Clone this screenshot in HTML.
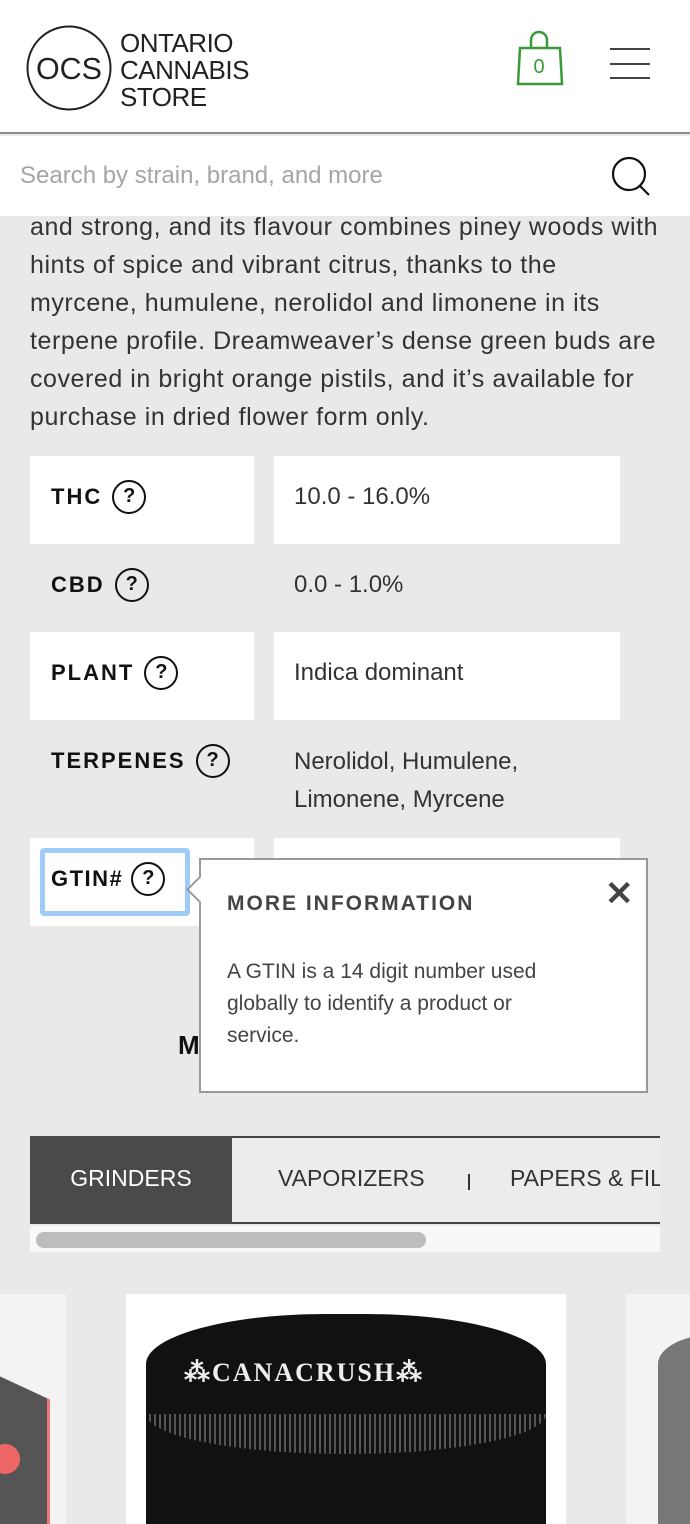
<!DOCTYPE html>
<html><head><meta charset="utf-8"><style>
*{margin:0;padding:0;box-sizing:border-box}
body{width:690px;height:1524px;overflow:hidden;background:#e9e9e9;font-family:"Liberation Sans",sans-serif;color:#333;position:relative}
.abs{position:absolute}
.hdr{left:0;top:0;width:690px;height:134px;background:#fff;border-bottom:2px solid #8c8c8c}
.p{left:30px;top:208px;width:660px;font-size:25px;line-height:38px;color:#333;letter-spacing:0.55px;white-space:nowrap}
.lab{font-size:22px;font-weight:bold;letter-spacing:2px;color:#111;display:flex;align-items:center}
.q{display:inline-block;width:34px;height:34px;border:2.5px solid #111;border-radius:50%;text-align:center;line-height:29px;font-size:20px;margin-left:10px;letter-spacing:0}
.val{font-size:24px;color:#333}
.wb{background:#fff}
</style></head><body>
<div class="abs hdr">
  <svg class="abs" style="left:26px;top:25px" width="86" height="86"><circle cx="43" cy="43" r="41.5" fill="none" stroke="#222" stroke-width="2"/><text x="43" y="54" text-anchor="middle" font-family="Liberation Sans" font-size="31" fill="#222" textLength="66" lengthAdjust="spacingAndGlyphs">OCS</text></svg>
  <div class="abs" style="left:120px;top:30px;font-size:26px;line-height:27px;color:#222;letter-spacing:-0.5px">ONTARIO<br>CANNABIS<br>STORE</div>
  <svg class="abs" style="left:515px;top:30px" width="50" height="56"><path d="M3 54 L5 18 L45 18 L47 54 Z" fill="none" stroke="#3a9a3a" stroke-width="2.5"/><path d="M16 18 V10 a8 8 0 0 1 16 0 V18" fill="none" stroke="#3a9a3a" stroke-width="2.5"/><text x="24" y="43" text-anchor="middle" font-size="20" fill="#3a9a3a" font-family="Liberation Sans">0</text></svg>
  <div class="abs" style="left:610px;top:48px;width:40px;height:2px;background:#444"></div>
  <div class="abs" style="left:610px;top:63px;width:40px;height:2px;background:#444"></div>
  <div class="abs" style="left:610px;top:77px;width:40px;height:2px;background:#444"></div>
</div>
<div class="abs p">and strong, and its flavour combines piney woods with<br>hints of spice and vibrant citrus, thanks to the<br>myrcene, humulene, nerolidol and limonene in its<br>terpene profile. Dreamweaver’s dense green buds are<br>covered in bright orange pistils, and it’s available for<br>purchase in dried flower form only.</div>
<div class="abs" style="left:0;top:136px;width:690px;height:80px;background:#fff;z-index:1">
  <div class="abs" style="left:20px;top:26px;font-size:24px;color:#a5a5a5">Search by strain, brand, and more</div>
  <svg class="abs" style="left:608px;top:18px" width="46" height="46"><circle cx="21" cy="20" r="16" fill="none" stroke="#111" stroke-width="2.2"/><path d="M32 32 L41 41" stroke="#111" stroke-width="2.2"/></svg>
</div>

<div class="abs wb" style="left:30px;top:456px;width:224px;height:88px"></div>
<div class="abs wb" style="left:274px;top:456px;width:346px;height:88px"></div>
<div class="abs lab" style="left:51px;top:480px">THC<span class="q">?</span></div>
<div class="abs val" style="left:294px;top:483px">10.0 - 16.0%</div>

<div class="abs lab" style="left:51px;top:568px">CBD<span class="q">?</span></div>
<div class="abs val" style="left:294px;top:571px">0.0 - 1.0%</div>

<div class="abs wb" style="left:30px;top:632px;width:224px;height:88px"></div>
<div class="abs wb" style="left:274px;top:632px;width:346px;height:88px"></div>
<div class="abs lab" style="left:51px;top:656px">PLANT<span class="q">?</span></div>
<div class="abs val" style="left:294px;top:659px">Indica dominant</div>

<div class="abs lab" style="left:51px;top:744px">TERPENES<span class="q">?</span></div>
<div class="abs val" style="left:294px;top:743px;line-height:38px">Nerolidol, Humulene,<br>Limonene, Myrcene</div>

<div class="abs wb" style="left:30px;top:838px;width:224px;height:88px"></div>
<div class="abs wb" style="left:274px;top:838px;width:346px;height:88px"></div>
<div class="abs" style="left:40px;top:848px;width:150px;height:68px;border:5px solid #9ecbf7;border-radius:4px"></div>
<div class="abs lab" style="left:51px;top:862px;letter-spacing:1.5px">GTIN#<span class="q" style="margin-left:8px">?</span></div>

<div class="abs" style="left:178px;top:1030px;font-size:26px;font-weight:bold;color:#111">M</div>

<div class="abs" style="left:199px;top:858px;width:449px;height:235px;background:#fff;border:2px solid #999">
  <div class="abs" style="left:-11px;top:20px;width:19px;height:19px;background:#fff;border-left:2px solid #999;border-bottom:2px solid #999;transform:rotate(45deg)"></div>
  <div class="abs" style="left:26px;top:32px;font-size:21px;font-weight:bold;letter-spacing:2px;color:#444">MORE INFORMATION</div>
  <div class="abs" style="left:404px;top:14px;font-size:34px;font-weight:bold;color:#444">✕</div>
  <div class="abs" style="left:26px;top:96px;width:340px;font-size:21px;line-height:32px;color:#444">A GTIN is a 14 digit number used globally to identify a product or service.</div>
</div>

<div class="abs" style="left:30px;top:1136px;width:630px;height:88px;border-top:2px solid #444;border-bottom:2px solid #444;background:#ececec"></div>
<div class="abs" style="left:30px;top:1136px;width:202px;height:88px;background:#4a4a4a"></div>
<div class="abs" style="left:30px;top:1165px;width:202px;text-align:center;font-size:23px;color:#fff">GRINDERS</div>
<div class="abs" style="left:278px;top:1165px;font-size:23px;color:#333">VAPORIZERS</div>
<div class="abs" style="left:468px;top:1174px;width:2px;height:16px;background:#333"></div>
<div class="abs" style="left:510px;top:1165px;width:150px;overflow:hidden;white-space:nowrap;font-size:23px;color:#333">PAPERS &amp; FILTERS</div>
<div class="abs" style="left:30px;top:1226px;width:630px;height:26px;background:#f8f8f8"></div>
<div class="abs" style="left:36px;top:1232px;width:390px;height:16px;background:#bdbdbd;border-radius:8px"></div>

<div class="abs" style="left:0;top:1294px;width:66px;height:230px;background:#f3f3f3;overflow:hidden">
  <div class="abs" style="left:-60px;top:80px;width:110px;height:200px;background:#555;transform:skewY(25deg);border-right:3px solid #e77"></div>
  <div class="abs" style="left:-10px;top:150px;width:30px;height:30px;border-radius:50%;background:#e66"></div>
</div>
<div class="abs" style="left:126px;top:1294px;width:440px;height:230px;background:#fff;overflow:hidden">
  <div class="abs" style="left:20px;top:20px;width:400px;height:260px;background:#111;border-radius:180px/50px"></div>
  <div class="abs" style="left:20px;top:120px;width:400px;height:40px;background:repeating-linear-gradient(90deg,#111 0 3px,#666 3px 5px);opacity:.8;border-radius:0 0 200px 200px/0 0 40px 40px"></div>
  <div class="abs" style="left:58px;top:64px;font-size:26px;font-weight:bold;color:#eee;font-family:'Liberation Serif',serif;letter-spacing:2px">⁂CANACRUSH⁂</div>
</div>
<div class="abs" style="left:626px;top:1294px;width:64px;height:230px;background:#f3f3f3;overflow:hidden">
  <div class="abs" style="left:32px;top:40px;width:200px;height:230px;background:#777;border-radius:60px/30px"></div>
</div>
</body></html>
